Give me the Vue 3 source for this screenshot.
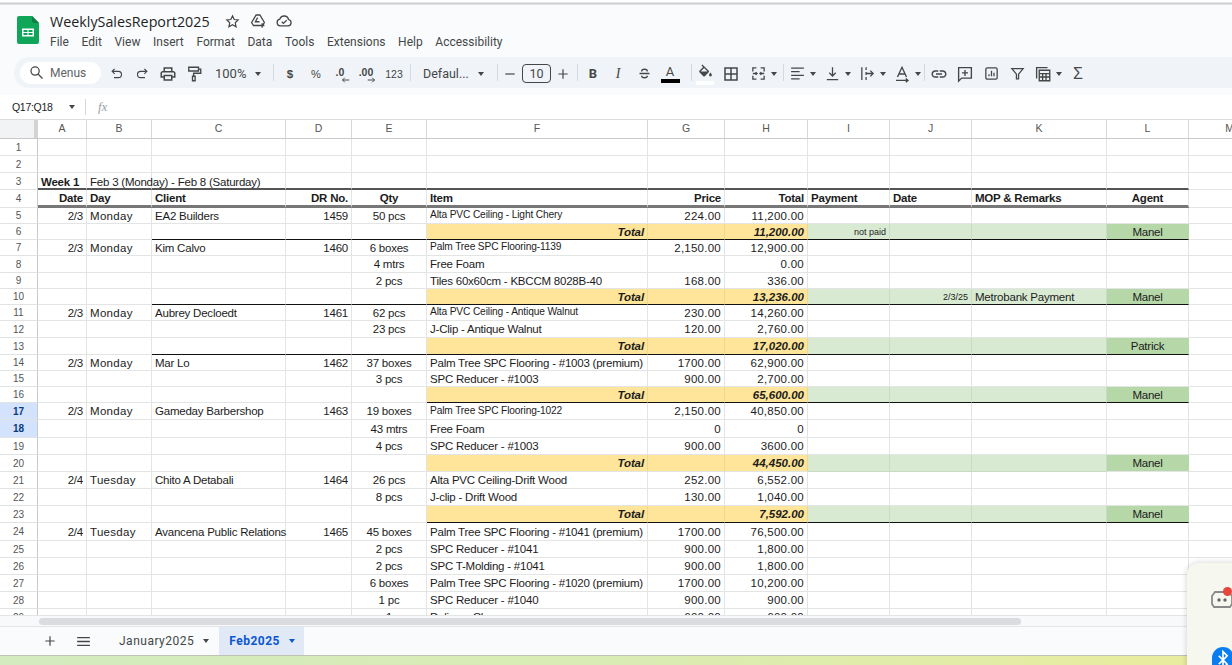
<script setup>
const colLetters = ['A','B','C','D','E','F','G','H','I','J','K','L','M']
const heights = [17,17,17,18,16,16,16,17,16,16,16,17,17,16,16,16,17,18,17,17,17,17,17,18,17,17,17,17,17]
const menus = ['File','Edit','View','Insert','Format','Data','Tools','Extensions','Help','Accessibility']

const data = {
  3: { week: true, a: 'Week 1', b: 'Feb 3 (Monday) - Feb 8 (Saturday)', line: 'thin-dark' },
  4: { head: true, a: 'Date', b: 'Day', c: 'Client', d: 'DR No.', e: 'Qty', f: 'Item', g: 'Price', h: 'Total', i: 'Payment', j: 'Date', k: 'MOP & Remarks', l: 'Agent', line: 'thick-dark' },
  5: { a: '2/3', b: 'Monday', c: 'EA2 Builders', d: '1459', e: '50 pcs', f: 'Alta PVC Ceiling - Light Chery', small: true, g: '224.00', h: '11,200.00' },
  6: { total: true, h: '11,200.00', i: 'not paid', l: 'Manel', line: 'from-c' },
  7: { a: '2/3', b: 'Monday', c: 'Kim Calvo', d: '1460', e: '6 boxes', f: 'Palm Tree SPC Flooring-1139', small: true, g: '2,150.00', h: '12,900.00' },
  8: { e: '4 mtrs', f: 'Free Foam', h: '0.00' },
  9: { e: '2 pcs', f: 'Tiles 60x60cm - KBCCM 8028B-40', g: '168.00', h: '336.00' },
  10: { total: true, h: '13,236.00', j: '2/3/25', k: 'Metrobank Payment', l: 'Manel', line: 'from-c' },
  11: { a: '2/3', b: 'Monday', c: 'Aubrey Decloedt', d: '1461', e: '62 pcs', f: 'Alta PVC Ceiling - Antique Walnut', small: true, g: '230.00', h: '14,260.00' },
  12: { e: '23 pcs', f: 'J-Clip - Antique Walnut', g: '120.00', h: '2,760.00' },
  13: { total: true, h: '17,020.00', l: 'Patrick', line: 'from-c' },
  14: { a: '2/3', b: 'Monday', c: 'Mar Lo', d: '1462', e: '37 boxes', f: 'Palm Tree SPC Flooring - #1003 (premium)', g: '1700.00', h: '62,900.00' },
  15: { e: '3 pcs', f: 'SPC Reducer - #1003', g: '900.00', h: '2,700.00' },
  16: { total: true, h: '65,600.00', l: 'Manel', line: 'from-f' },
  17: { sel: true, a: '2/3', b: 'Monday', c: 'Gameday Barbershop', d: '1463', e: '19 boxes', f: 'Palm Tree SPC Flooring-1022', small: true, g: '2,150.00', h: '40,850.00' },
  18: { sel: true, e: '43 mtrs', f: 'Free Foam', g: '0', h: '0' },
  19: { e: '4 pcs', f: 'SPC Reducer - #1003', g: '900.00', h: '3600.00' },
  20: { total: true, h: '44,450.00', l: 'Manel' },
  21: { a: '2/4', b: 'Tuesday', c: 'Chito A Detabali', d: '1464', e: '26 pcs', f: 'Alta PVC Ceiling-Drift Wood', g: '252.00', h: '6,552.00' },
  22: { e: '8 pcs', f: 'J-clip - Drift Wood', g: '130.00', h: '1,040.00' },
  23: { total: true, h: '7,592.00', l: 'Manel', line: 'from-f' },
  24: { a: '2/4', b: 'Tuesday', c: 'Avancena Public Relations', d: '1465', e: '45 boxes', f: 'Palm Tree SPC Flooring - #1041 (premium)', g: '1700.00', h: '76,500.00' },
  25: { e: '2 pcs', f: 'SPC Reducer - #1041', g: '900.00', h: '1,800.00' },
  26: { e: '2 pcs', f: 'SPC T-Molding - #1041', g: '900.00', h: '1,800.00' },
  27: { e: '6 boxes', f: 'Palm Tree SPC Flooring - #1020 (premium)', g: '1700.00', h: '10,200.00' },
  28: { e: '1 pc', f: 'SPC Reducer - #1040', g: '900.00', h: '900.00' },
  29: { e: '1', f: 'Delivery Charge', g: '600.00', h: '600.00' }
}

const keys = ['a','b','c','d','e','f','g','h','i','j','k','l','m']
const rows = heights.map((h, i) => {
  const n = i + 1
  const r = data[n] || {}
  return { n, height: h + 'px', sel: r.sel, line: r.line, head: r.head, week: r.week, total: r.total, small: r.small, r }
})
function text(row, k) {
  if (row.total && k === 'f') return 'Total'
  return row.r[k] || ''
}
function cellClass(row, k) {
  const idx = keys.indexOf(k)
  const out = ['cell', 'col-' + k]
  if (row.total) {
    if (k === 'f' || k === 'g' || k === 'h') out.push('yellow')
    if (k === 'i' || k === 'j' || k === 'k') out.push('green')
    if (k === 'l') out.push('agent')
    if (k === 'f' || k === 'h') out.push('totaltext')
    if (k === 'i' || k === 'j') out.push('tiny')
  }
  if (row.small && k === 'f') out.push('tiny-item')
  if (row.head) out.push('bold')
  if (row.head && k === 'j') out.push('left')
  if (row.week) out.push('weekcell')
  if (row.week && k === 'a') out.push('bold', 'left')
  if (row.week && k === 'b') out.push('left')
  if (k !== 'm') {
    if (row.line === 'thin-dark') out.push('ln-thin')
    if (row.line === 'thick-dark') out.push('ln-thick')
    if (row.line === 'from-c' && idx >= 2) out.push('ln-black')
    if (row.line === 'from-f' && idx >= 5) out.push('ln-black')
  }
  return out
}
</script>

<template>
  <div class="page">
    <div class="topstrip"></div>

    <header class="head">
      <svg class="logo" viewBox="0 0 22 28" width="22" height="28">
        <path d="M2 0h13l7 7v19a2 2 0 0 1-2 2H2a2 2 0 0 1-2-2V2a2 2 0 0 1 2-2z" fill="#10a659" />
        <path d="M15 0l7 7h-5a2 2 0 0 1-2-2z" fill="#0b8043" />
        <path d="M5 12.500h12v8H5zM6.500 14v2h4v-2zm5 0v2h4v-2zm-5 3v2h4v-2zm5 0v2h4v-2z" fill="#fff" fill-rule="evenodd" />
      </svg>
      <div class="head-main">
        <div class="title-row">
          <span class="doc-title">WeeklySalesReport2025</span>
          <svg class="ti first" viewBox="0 0 24 24" width="17" height="17"><path d="M12 4l2.400 5.200 5.600.7-4.100 3.900 1.100 5.600-5-2.800-5 2.800 1.100-5.600L4 9.900l5.600-.7z" /></svg>
          <svg class="ti" viewBox="0 0 24 24" width="18" height="18"><path d="M9.500 4h5l6 10-2.500 4H6l-2.500-4zM9.500 4l-6 10M14 13H8.500l3-5.500M17.500 15v6M14.500 18h6" /></svg>
          <svg class="ti" viewBox="0 0 24 24" width="18" height="18"><path d="M7 18.500a4.500 4.500 0 0 1-.6-8.900A6 6 0 0 1 18 10a4.300 4.300 0 0 1-.5 8.500zM9 13l2.200 2.200L15.500 11" /></svg>
        </div>
        <nav class="menus"><span v-for="m in menus" :key="m">{{ m }}</span></nav>
      </div>
    </header>

    <div class="toolbar">
      <div class="search">
        <svg class="ic" viewBox="0 0 24 24" width="17" height="17"><circle cx="10" cy="10" r="5.800" /><path d="M14.500 14.500L20.500 20.500" /></svg>
        <span>Menus</span>
      </div>
      <span class="b"><svg class="ic" viewBox="0 0 24 24" width="15" height="15"><path d="M9 4.500L5 8.500l4 4M5 8.500h10a5 5 0 0 1 0 10H8" /></svg></span>
      <span class="b"><svg class="ic" viewBox="0 0 24 24" width="15" height="15"><path d="M15 4.500l4 4-4 4M19 8.500H9a5 5 0 0 0 0 10h7" /></svg></span>
      <span class="b"><svg class="fi" viewBox="0 0 24 24" width="18" height="18"><path d="M19 8h-1V3H6v5H5c-1.660 0-3 1.340-3 3v6h4v4h12v-4h4v-6c0-1.660-1.340-3-3-3zM8 5h8v3H8V5zm8 12v2H8v-4h8v2zm2-2v-2H6v2H4v-4c0-.55.45-1 1-1h14c.55 0 1 .45 1 1v4h-2z" /></svg></span>
      <span class="b"><svg class="ic" viewBox="0 0 24 24" width="18" height="18"><path d="M5 3h13v5H5zM18 5.500h3V11h-9.500v4M10 15h3.500v6H10z" /></svg></span>
      <span class="zoom"><span>100%</span><i class="caret"></i></span>
      <i class="sep s-zoom"></i>
      <span class="b sym dollar">$</span>
      <span class="b sym pct">%</span>
      <span class="b sym dec"><span class="dec-t">.0</span><svg class="ic thin dec-a" viewBox="0 0 12 8" width="9" height="6"><path d="M11 4H2M5 1L2 4l3 3" /></svg></span>
      <span class="b sym dec"><span class="dec-t">.00</span><svg class="ic thin dec-a" viewBox="0 0 12 8" width="9" height="6"><path d="M1 4h9M7 1l3 3-3 3" /></svg></span>
      <span class="b sym num">123</span>
      <i class="sep s-num"></i>
      <span class="font"><span>Defaul...</span><i class="caret"></i></span>
      <i class="sep s-font"></i>
      <span class="b w18"><svg class="ic" viewBox="0 0 24 24" width="16" height="16"><path d="M5 12h14" /></svg></span>
      <span class="size">10</span>
      <span class="b w18"><svg class="ic" viewBox="0 0 24 24" width="16" height="16"><path d="M5 12h14M12 5v14" /></svg></span>
      <i class="sep s-plus"></i>
      <span class="b w24 t-b">B</span>
      <span class="b t-i">I</span>
      <span class="b"><svg class="ic" viewBox="0 0 24 24" width="17" height="17"><path d="M5 12h14M8 9c0-4 8-4 8 0M8 15c0 4 8 4 8 0" /></svg></span>
      <span class="b t-a"><span>A</span><i class="colorbar"></i></span>
      <i class="sep s-a"></i>
      <span class="b fill"><svg class="fi" viewBox="0 0 24 20" width="17" height="15"><path d="M16.560 8.940L7.620 0 6.210 1.410l2.380 2.380-5.150 5.150c-.59.59-.59 1.540 0 2.120l5.500 5.500c.29.29.68.44 1.060.44s.77-.15 1.060-.44l5.500-5.500c.59-.58.59-1.530 0-2.120zM5.210 10L10 5.210 14.790 10H5.210zM19 11.500s-2 2.170-2 3.500c0 1.100.9 2 2 2s2-.9 2-2c0-1.330-2-3.500-2-3.500z" /></svg><i class="whitebar"></i></span>
      <span class="b"><svg class="fi" viewBox="0 0 24 24" width="18" height="18"><path d="M3 3v18h18V3H3zm8 16H5v-6h6v6zm0-8H5V5h6v6zm8 8h-6v-6h6v6zm0-8h-6V5h6v6z" /></svg></span>
      <span class="b w38"><svg class="ic" viewBox="0 0 24 24" width="17" height="17"><path d="M9 4H4v5M15 4h5v5M9 20H4v-5M15 20h5v-5M4 12h6M8 10l2 2-2 2M20 12h-6M16 10l-2 2 2 2" /></svg><i class="caret"></i></span>
      <i class="sep s-merge"></i>
      <span class="b w35"><svg class="ic" viewBox="0 0 24 24" width="17" height="17"><path d="M3 4.500h18M3 9.500h12M3 14.500h18M3 19.500h12" /></svg><i class="caret"></i></span>
      <span class="b w35"><svg class="ic" viewBox="0 0 24 24" width="17" height="17"><path d="M12 3v12M7.500 11l4.500 4.500 4.500-4.500M4 20.500h16" /></svg><i class="caret"></i></span>
      <span class="b w35"><svg class="ic" viewBox="0 0 24 24" width="17" height="17"><path d="M4 3v18M10 3v4M10 10v4M10 17v4M10 12h10M16 8l4 4-4 4" /></svg><i class="caret"></i></span>
      <span class="b w33"><svg class="ic" viewBox="0 0 24 24" width="18" height="18"><path d="M6 16L12 3l6 13M8 12h8M4 20.500h15M17 18l3 2.500-3 2.500" /></svg><i class="caret"></i></span>
      <i class="sep s-rot"></i>
      <span class="b"><svg class="fi" viewBox="0 0 24 24" width="18" height="18"><path d="M3.900 12c0-1.710 1.390-3.100 3.100-3.100h4V7H7c-2.760 0-5 2.240-5 5s2.240 5 5 5h4v-1.900H7c-1.710 0-3.100-1.390-3.100-3.100zM8 13h8v-2H8v2zm9-6h-4v1.900h4c1.710 0 3.100 1.390 3.100 3.100s-1.390 3.100-3.100 3.100h-4V17h4c2.760 0 5-2.240 5-5s-2.240-5-5-5z" /></svg></span>
      <span class="b"><svg class="ic" viewBox="0 0 24 24" width="18" height="18"><path d="M3.500 3.500h17v14H7.500l-4 4zM12 6.500v8M8 10.500h8" /></svg></span>
      <span class="b"><svg class="ic" viewBox="0 0 24 24" width="17" height="17"><rect x="4" y="4" width="16" height="16" rx="2" /><path d="M8.500 16v-3M12 16V8M15.500 16v-5" /></svg></span>
      <span class="b"><svg class="ic" viewBox="0 0 24 24" width="17" height="17"><path d="M4 5h16l-6.500 8v6.500h-3V13z" /></svg></span>
      <span class="b w35"><svg class="ic" viewBox="0 0 24 24" width="18" height="18"><path d="M3.500 18V3.500H18M7 7h14v14H7zM7 11.500h14M7 16h14M11.500 11.500V21M16 11.500V21" /></svg><i class="caret"></i></span>
      <span class="b t-sigma">Σ</span>
    </div>

    <div class="fbar">
      <span class="namebox">Q17:Q18</span>
      <i class="caret"></i>
      <i class="sep s-name"></i>
      <span class="fx">fx</span>
    </div>

    <div class="sheet">
      <div class="row hdr">
        <div class="corner"></div>
        <div v-for="c in colLetters" :key="c" class="letter" :class="'col-' + c.toLowerCase()">{{ c }}</div>
      </div>
      <div class="body">
        <div v-for="row in rows" :key="row.n" class="row" :style="{ height: row.height }">
          <div class="rn" :class="{ sel: row.sel }">{{ row.n }}</div>
          <div v-for="k in keys" :key="k" :class="cellClass(row, k)"><span class="tx">{{ text(row, k) }}</span></div>
        </div>
      </div>
    </div>

    <div class="scrollrow"><div class="thumb"></div></div>

    <div class="tabs">
      <svg class="ic plus" viewBox="0 0 24 24" width="16" height="16"><path d="M5 12h14M12 5v14" /></svg>
      <svg class="ic burger" viewBox="0 0 24 24" width="17" height="17"><path d="M3 6.500h18M3 12h18M3 17.500h18" /></svg>
      <div class="tab"><span>January2025</span><i class="caret"></i></div>
      <div class="tab active"><span>Feb2025</span><i class="caret blue"></i></div>
    </div>

    <div class="desk"></div>

    <aside class="float">
      <svg class="bot" viewBox="0 0 24 20" width="24" height="20"><path d="M5 3h14l3 4v8l-2 3H4l-2-3V7z" fill="none" stroke="#8a8a8a" stroke-width="1.800" /><circle cx="9" cy="11" r="1.700" fill="#666" /><circle cx="15" cy="11" r="1.700" fill="#666" /></svg>
      <i class="reddot"></i>
      <div class="bt"><svg viewBox="0 0 24 24" width="20" height="20"><path d="M7 7l10 10-5 5V2l5 5L7 17" fill="none" stroke="#fff" stroke-width="2" /></svg></div>
    </aside>
  </div>
</template>

<style>
html, body { margin: 0; background: #fff; }
</style>

<style scoped>
.page { position: relative; width: 1232px; height: 665px; overflow: hidden; background: #f9fbfd; font-family: "Liberation Sans", Arial, sans-serif; color: #202124; }
i { display: block; font-style: normal; }
.topstrip { height: 5px; background: linear-gradient(#fff 0, #fff 2px, #c9cbcd 3px, #e6e8ea 5px); }

.head { display: flex; height: 52px; box-sizing: border-box; padding: 11px 0 0 17px; }
.logo { flex: none; }
.head-main { margin-left: 11px; margin-top: -7px; }
.title-row { display: flex; align-items: center; height: 24px; }
.doc-title { font: 14.300px "Open Sans", sans-serif; color: #1f1f1f; width: 173px; }
.ti { fill: none; stroke: #444746; stroke-width: 1.700; margin-right: 8px; flex: none; }
.ti.first { margin-left: 1px; margin-right: 8px; }
.menus { display: flex; gap: 12.650px; font: 12px Roboto, sans-serif; color: #444746; margin-top: 2px; }

.toolbar { display: flex; align-items: center; height: 31px; margin: 0 0 0 14px; padding-left: 6px; border-radius: 16px 0 0 16px; background: #f0f4f9; font-family: Roboto, sans-serif; color: #444746; }
.search { display: flex; align-items: center; width: 81px; height: 22px; background: #fff; border-radius: 11px; font-size: 12px; color: #5f6368; flex: none; box-sizing: border-box; padding-left: 8px; margin-right: 2px; }
.search span { margin-left: 5px; }
.ic { fill: none; stroke: #444746; stroke-width: 1.800; flex: none; }
.fi { fill: #444746; flex: none; }
.thin { stroke-width: 1.300; }
.b { display: flex; align-items: center; justify-content: center; width: 26px; height: 24px; flex: none; position: relative; gap: 4px; box-sizing: border-box; padding-top: 2px; }
.w18 { width: 18px; }
.w24 { width: 24px; }
.w33 { width: 33px; }
.w35 { width: 35px; }
.w38 { width: 38px; }
.caret { width: 0; height: 0; border-left: 3.500px solid transparent; border-right: 3.500px solid transparent; border-top: 4px solid #444746; flex: none; }
.zoom { display: flex; align-items: center; width: 61px; padding-left: 8px; padding-top: 2px; box-sizing: border-box; font-size: 13px; flex: none; }
.zoom .caret { margin-left: 9px; }
.sep { width: 1px; height: 17px; background: #d5d8dc; flex: none; }
.s-zoom { margin: 0 3px 0 5px; }
.s-num { margin: 0 3px; }
.s-font { margin: 0 3px 0 6px; }
.s-plus { margin: 0 3px 0 5px; }
.s-a { margin: 0 0 0 8px; }
.s-merge { margin: 0 1px; }
.s-rot { margin: 0 1px; }
.sym { font: 11.500px "Liberation Sans", sans-serif; color: #444746; }
.dollar { font-weight: 700; }
.pct { font-size: 11px; }
.dec { font-weight: 700; font-size: 10.500px; }
.dec-t { position: relative; bottom: 2px; right: 2px; }
.dec-a { position: absolute; right: 5px; bottom: 2px; }
.num { font-size: 10.500px; }
.font { display: flex; align-items: center; justify-content: space-between; width: 77px; padding: 2px 7px 0 9px; box-sizing: border-box; font-size: 12.500px; flex: none; }
.size { width: 29px; height: 19px; border: 1px solid #444746; border-radius: 4px; box-sizing: border-box; font-size: 12.500px; line-height: 17px; text-align: center; margin: 2px 3px 0; flex: none; }
.t-b { font: 700 13px Roboto, sans-serif; }
.t-i { font: italic 14px "Liberation Serif", serif; }
.t-a { flex-direction: column; gap: 0; font-size: 13px; line-height: 14px; }
.colorbar { width: 19px; height: 4px; background: #000; margin-top: 0; }
.fill { flex-direction: column; gap: 0; padding-bottom: 2px; padding-top: 0; }
.whitebar { position: absolute; left: 4px; right: 4px; bottom: 0; height: 4px; background: #fff; }
.t-sigma { font: 16px "Liberation Sans", sans-serif; }

.fbar { display: flex; align-items: center; height: 24px; margin-top: 7px; background: #fff; font-size: 10.500px; border-bottom: 1px solid #dadce0; box-sizing: content-box; padding-left: 12px; }
.namebox { width: 57px; color: #202124; letter-spacing: -0.300px; }
.s-name { margin-left: 10px; height: 16px; }
.fx { font: italic 13px "Liberation Serif", serif; color: #9aa0a6; margin-left: 12px; }

.sheet { height: 495px; overflow: hidden; background: #fff; font-size: 11.500px; letter-spacing: -0.220px; color: #1c1c1c; }
.row { display: flex; }
.hdr { height: 19px; border-bottom: 1px solid #c7c9cb; box-sizing: border-box; letter-spacing: 0; }
.corner { width: 38px; flex: none; box-sizing: border-box; background: #f1f3f4; border-right: 4px solid #d1d3d5; }
.letter { display: flex; align-items: center; justify-content: center; font-size: 10.500px; color: #555; box-sizing: border-box; border-right: 1px solid #d6d8da; padding-bottom: 2px; flex: none; }
.rn { width: 38px; flex: none; box-sizing: border-box; border-right: 1px solid #c7c9cb; border-bottom: 1px solid #e1e3e3; font-size: 10px; letter-spacing: 0; color: #555; display: flex; align-items: center; justify-content: center; }
.rn.sel { background: #d3e3fd; color: #0b3a7a; font-weight: 700; }

.cell { position: relative; display: flex; align-items: center; box-sizing: border-box; border-right: 1px solid #e3e4e4; border-bottom: 1px solid #e3e4e4; padding: 0 3px; white-space: nowrap; flex: none; }
.col-a { width: 49px; justify-content: flex-end; }
.col-b { width: 65px; letter-spacing: 0.300px; }
.col-c { width: 134px; }
.col-d { width: 66px; justify-content: flex-end; }
.col-e { width: 75px; justify-content: center; }
.col-f { width: 221px; }
.col-g { width: 77px; justify-content: flex-end; letter-spacing: 0.250px; }
.col-h { width: 83px; justify-content: flex-end; letter-spacing: 0.250px; }
.col-i { width: 82px; }
.col-j { width: 82px; justify-content: flex-end; }
.col-k { width: 135px; }
.col-l { width: 82px; justify-content: center; }
.col-m { width: 82px; }
.letter.col-a, .letter.col-b, .letter.col-c, .letter.col-d, .letter.col-e, .letter.col-f, .letter.col-g, .letter.col-h, .letter.col-i, .letter.col-j, .letter.col-k, .letter.col-l, .letter.col-m { justify-content: center; font-size: 10.500px; letter-spacing: 0; }

.left { justify-content: flex-start; }
.weekcell { padding-top: 2px; letter-spacing: -0.220px; }
.bold { font-weight: 700; letter-spacing: -0.220px; }
.yellow { background: #ffe599; border-right-color: #f0d78a; }
.green { background: #d9ead3; border-right-color: #c9dcc3; border-bottom-color: #c9dcc3; }
.agent { background: #b6d7a8; border-right-color: #b6d7a8; }
.totaltext { font-weight: 700; font-style: italic; justify-content: flex-end; letter-spacing: -0.100px; }
.col-h.totaltext { letter-spacing: 0; }
.tiny { font-size: 9px; letter-spacing: 0; justify-content: flex-end; }
.tiny-item { font-size: 10.200px; letter-spacing: -0.140px; padding-bottom: 2px; }
.ln-thin { border-bottom: 2px solid #555; }
.ln-thick { border-bottom: 3px solid #777; }
.ln-black { border-bottom: 1px solid #111; }

.scrollrow { height: 11px; background: #f8f9fa; padding: 2px 0 0 39px; box-sizing: border-box; border-top: 1px solid #e3e4e4; }
.thumb { width: 982px; height: 7px; background: #dadce0; border-radius: 4px; }

.tabs { display: flex; align-items: center; height: 30px; box-sizing: border-box; background: #f9fbfd; border-top: 1px solid #e3e5e8; border-bottom: 1px solid #bfc2b6; font: 12px Roboto, sans-serif; letter-spacing: 0.500px; color: #444746; }
.plus { margin-left: 42px; }
.burger { margin-left: 17px; margin-right: 18px; }
.tab { display: flex; align-items: center; height: 100%; padding: 0 9px 0 9px; gap: 9px; }
.tab.active { margin-left: 1px; background: #e1e9f7; color: #0b57d0; font-weight: 700; padding: 0 9px 0 10px; width: 85px; box-sizing: border-box; }
.blue { border-top-color: #0b57d0; }

.desk { height: 10px; background: linear-gradient(90deg, #d3ebbf, #d9ecb4 50%, #e9ec9c); }

.float { position: absolute; left: 1187px; top: 563px; width: 60px; height: 110px; background: #f6f7ee; border-radius: 12px 0 0 0; box-shadow: 0 0 6px rgba(0,0,0,.18); }
.bot { position: absolute; left: 23px; top: 26px; }
.reddot { position: absolute; left: 36px; top: 24px; width: 9px; height: 9px; border-radius: 50%; background: #e8453c; }
.bt { position: absolute; left: 25px; top: 84px; width: 22px; height: 30px; border-radius: 11px; background: #0a7df0; display: flex; justify-content: center; padding-top: 3px; box-sizing: border-box; }
</style>
